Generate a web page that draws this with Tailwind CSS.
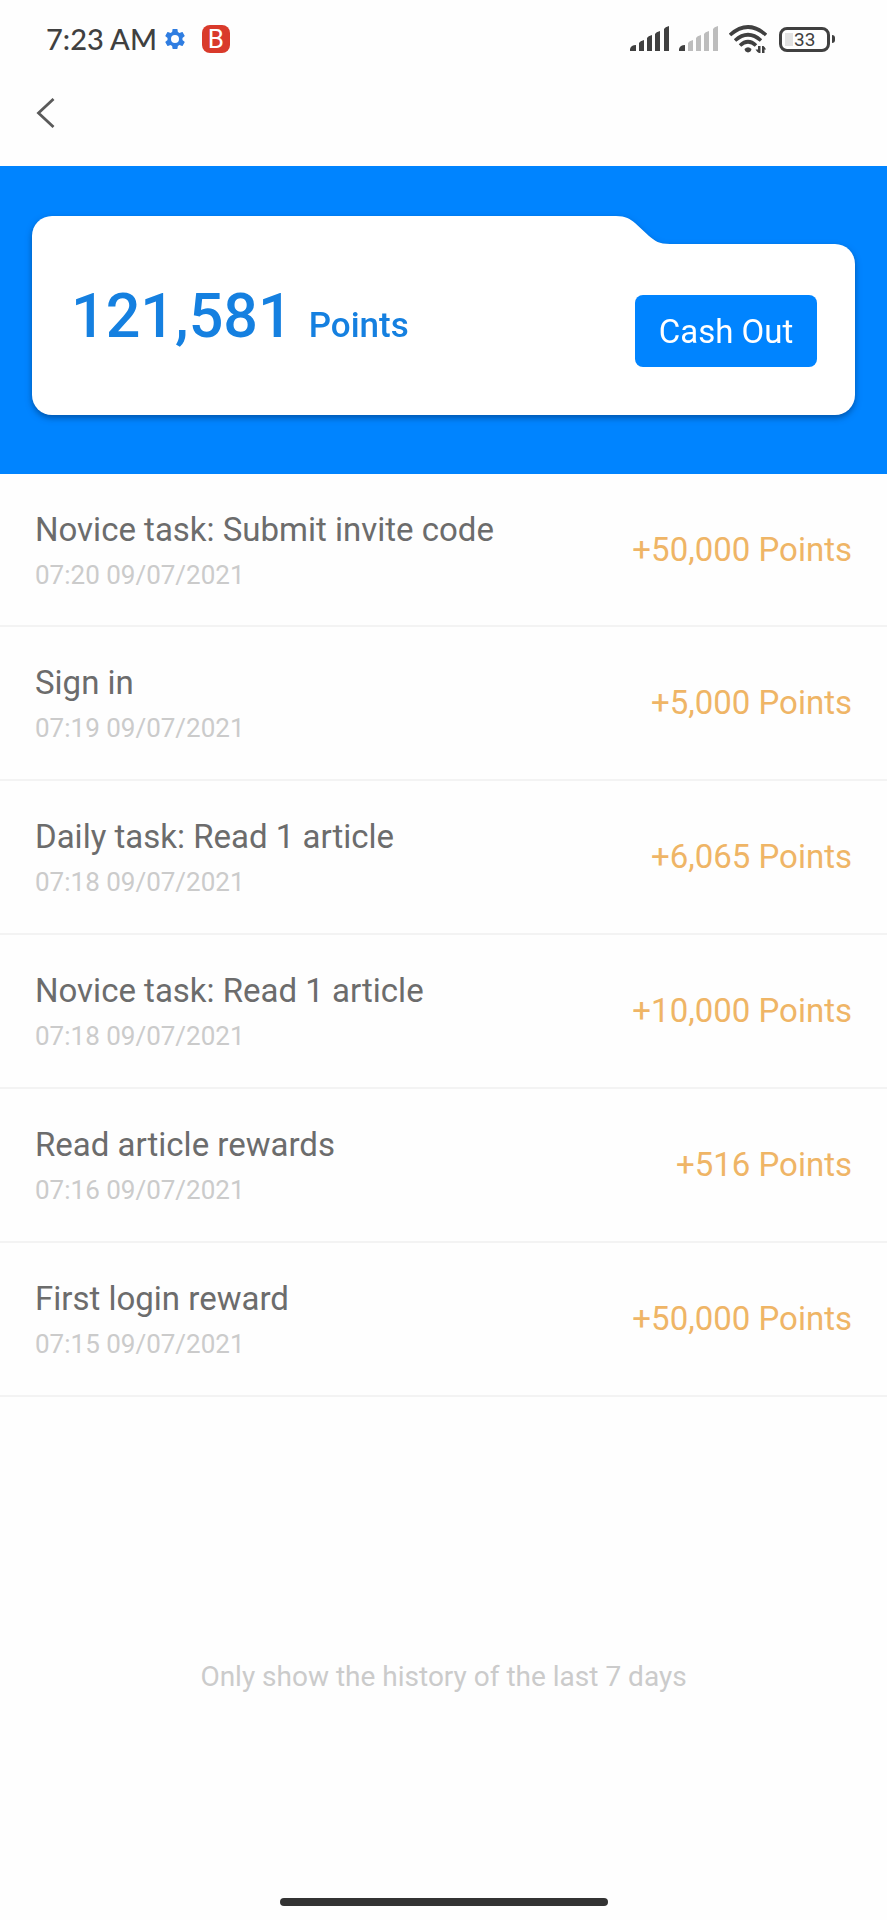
<!DOCTYPE html>
<html lang="en">
<head>
  <meta charset="UTF-8" />
  <meta name="viewport" content="width=device-width, initial-scale=1.0" />
  <title>Points History</title>
  <script src="https://cdn.jsdelivr.net/npm/@tailwindcss/browser@4"></script>
</head>
<body class="bg-[#fefefe] min-h-screen flex flex-col font-['Roboto',sans-serif]">

  <!-- Status Bar -->
  <div class="h-[78px] pl-[46px] pr-[52px] flex items-center justify-between text-[#404040]">
    <div class="flex items-center">
      <span class="font-['Lato',sans-serif] text-[29px] leading-8 font-medium">7:23 AM</span>
      <svg class="ml-2 w-5 h-5" viewBox="2 2 20 20" fill="#2f7de1">
        <path fill-rule="evenodd" d="M19.430 12.980c.04-.32.07-.64.07-.98s-.03-.66-.07-.98l2.110-1.650c.19-.15.24-.42.12-.64l-2-3.460c-.12-.22-.39-.3-.61-.22l-2.490 1c-.52-.4-1.080-.73-1.690-.98l-.38-2.650C14.460 2.180 14.250 2 14 2h-4c-.25 0-.46.18-.49.42l-.38 2.650c-.61.25-1.170.59-1.690.98l-2.490-1c-.23-.09-.49 0-.61.22l-2 3.460c-.13.22-.07.49.12.64l2.110 1.650c-.04.32-.07.65-.07.98s.03.66.07.98l-2.110 1.650c-.19.15-.24.42-.12.64l2 3.460c.12.22.39.3.61.22l2.490-1c.52.4 1.080.73 1.690.98l.38 2.650c.03.24.24.42.49.42h4c.25 0 .46-.18.49-.42l.38-2.650c.61-.25 1.170-.59 1.690-.98l2.490 1c.23.09.49 0 .61-.22l2-3.460c.12-.22.07-.49-.12-.64l-2.110-1.650zM12 16a4 4 0 1 1 0-8 4 4 0 0 1 0 8z" />
      </svg>
      <span class="ml-[17px] w-7 h-7 rounded-lg bg-[#d93a2b] text-white text-[26px] leading-7 text-center">B</span>
    </div>
    <div class="flex items-center">
      <svg class="w-10 h-7" viewBox="0 0 40 28" fill="#404040">
        <path d="M0 26V24Q1 20 6 20V26ZM9 26V18Q10 16 14 15V26ZM17 26V13Q18 11 22 10V26ZM25 26V9Q26 7 30 6V26ZM34 26V4Q35 2 39 1V26Z" />
      </svg>
      <svg class="ml-[9px] w-10 h-7" viewBox="0 0 40 28" fill="#bdbdbd">
        <path d="M0 26V24Q1 20 6 20V26Z" fill="#404040" />
        <path d="M9 26V18Q10 16 14 15V26ZM17 26V13Q18 11 22 10V26ZM25 26V9Q26 7 30 6V26ZM34 26V4Q35 2 39 1V26Z" />
      </svg>
      <svg class="ml-[10px] w-[38px] h-7" viewBox="0 0 38 28" fill="none" stroke="#404040" stroke-width="3.6">
        <path d="M1 10Q19 -6 37 10M6 15.500Q19 4 32 15.500M11 20.500Q19 13 27 20.500" />
        <path d="M15.500 24Q19 20.500 22.500 24Q22 27 19 27.500Q16 27 15.500 24Z" fill="#404040" stroke="none" />
        <path d="M31.500 21V28H30Q28 27 26.500 24.500H29V21ZM33 28V21H34.500Q36 22 37 24.500H35.500V28Z" fill="#404040" stroke="none" />
      </svg>
      <div class="ml-3 w-[51px] h-[25px] border-[3px] border-[#404040] rounded-lg flex">
        <div class="m-[3px] mr-0 w-2 bg-[#e2e2e2]"></div>
        <span class="ml-px text-[19px] leading-5">33</span>
      </div>
      <div class="ml-[2px] w-[3px] h-2 rounded-r bg-[#404040]"></div>
    </div>
  </div>

  <!-- Back -->
  <header class="h-[88px] pl-9 pt-5">
    <button aria-label="Back" class="block">
      <svg class="w-5 h-[30px]" viewBox="0 0 20 30" fill="none" stroke="#5a5a5a" stroke-width="2.800">
        <path d="M17.500 1L2.500 15L17.500 29" />
      </svg>
    </button>
  </header>

  <!-- Balance Card -->
  <section class="bg-[#0084ff] px-8 pt-[50px] pb-[59px]">
    <div class="drop-shadow-[0_3px_3px_rgba(0,40,90,0.5)]">
      <div class="flex h-7">
        <div class="flex-1 bg-white rounded-tl-[20px]"></div>
        <svg class="w-[54px] h-7" viewBox="0 0 54 28" fill="#fff">
          <path d="M0 0C10 0 14 3 19 7L33 20C39 25 43 28 54 28H0Z" />
        </svg>
        <div class="w-[185px]"></div>
      </div>
      <div class="bg-white rounded-b-[20px] rounded-tr-[20px] pt-[41px] pb-12 pl-[39px] pr-[38px] flex items-start justify-between">
        <p class="flex items-baseline gap-4 font-medium text-[#1580e0]">
          <span class="text-[61px] leading-[62px]">121,581</span>
          <span class="text-[35px]">Points</span>
        </p>
        <button class="mt-[10px] w-[182px] h-[72px] pt-[2px] rounded-lg bg-[#0084ff] text-white text-[33px]">Cash Out</button>
      </div>
    </div>
  </section>

  <!-- History -->
  <ul id="history"></ul>

  <p class="mt-[260px] mb-10 text-center text-[28px] leading-10 text-[#cbcbcb]">Only show the history of the last 7 days</p>

  <!-- Home Indicator -->
  <div class="mt-auto mb-[14px] mx-auto w-[328px] h-2 rounded-full bg-[#333]"></div>

  <script>
    const history_items = [
      ["Novice task: Submit invite code", "07:20 09/07/2021", "+50,000 Points"],
      ["Sign in", "07:19 09/07/2021", "+5,000 Points"],
      ["Daily task: Read 1 article", "07:18 09/07/2021", "+6,065 Points"],
      ["Novice task: Read 1 article", "07:18 09/07/2021", "+10,000 Points"],
      ["Read article rewards", "07:16 09/07/2021", "+516 Points"],
      ["First login reward", "07:15 09/07/2021", "+50,000 Points"]
    ];

    document.getElementById("history").innerHTML = history_items.map(([title, time, points]) => `
      <li class="h-[154px] first:h-[153px] px-[35px] flex items-center justify-between border-b-2 border-[#f3f3f3]">
        <div class="pt-[3px]">
          <p class="text-[33px] leading-10 text-[#6c6c6c]">${title}</p>
          <p class="mt-[7px] text-[26px] leading-9 text-[#cbcbcb]">${time}</p>
        </div>
        <span class="text-[33px] leading-10 text-[#efb566]">${points}</span>
      </li>`).join("");
  </script>

</body>
</html>
